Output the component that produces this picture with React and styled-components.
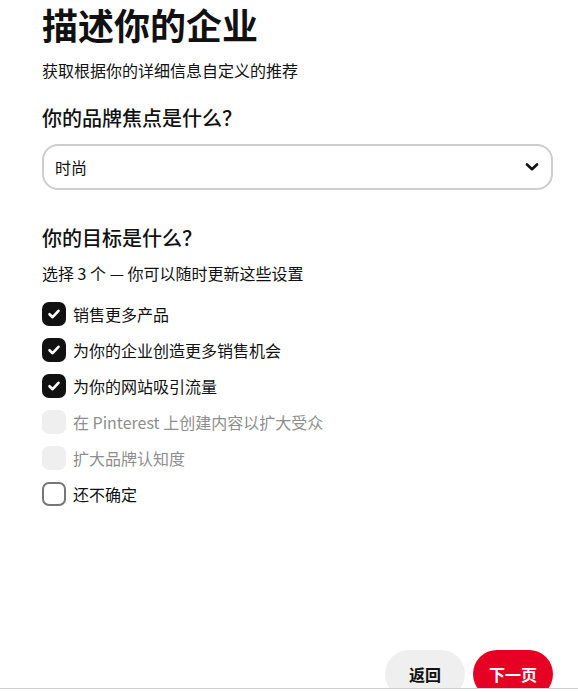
import React from "react";
import styled, { createGlobalStyle } from "styled-components";

const Global = createGlobalStyle`
  html, body { margin: 0; padding: 0; background: #fff; }
  body { font-family: "Noto Sans CJK SC", "Noto Sans", sans-serif; color: #111; }
  * { box-sizing: border-box; }
`;

const Frame = styled.div`
  height: 689px;
  border-bottom: 1px solid #cdcdcd;
  overflow: hidden;
  display: flex;
  flex-direction: column;
  padding: 2px 25px 0 42px;
`;

const Title = styled.h1`
  margin: 0;
  font-size: 36px;
  line-height: 44px;
  font-weight: 700;
  color: #111;
`;

const Subtitle = styled.p`
  margin: 12px 0 0;
  font-size: 16px;
  line-height: 24px;
  color: #111;
`;

const Question = styled.h2`
  margin: ${(p) => p.$mt}px 0 0;
  font-size: 20px;
  line-height: 28px;
  font-weight: 500;
  color: #111;
`;

const Select = styled.div`
  margin-top: 12px;
  height: 46px;
  border: 2px solid #cdcdcd;
  border-radius: 16px;
  display: flex;
  align-items: center;
  justify-content: space-between;
  padding: 0 12px 0 11px;
  font-size: 16px;
  color: #111;
`;

const Helper = styled.p`
  margin: 9px 0 0;
  font-size: 16px;
  line-height: 24px;
  color: #111;
`;

const List = styled.div`
  margin-top: 11px;
  display: flex;
  flex-direction: column;
`;

const Row = styled.label`
  height: 36px;
  display: flex;
  align-items: center;
  gap: 7px;
  font-size: 16px;
  color: ${(p) => (p.$disabled ? "#8e8e8e" : "#111")};
`;

const Box = styled.span`
  width: 24px;
  height: 24px;
  border-radius: 7px;
  flex-shrink: 0;
  display: flex;
  align-items: center;
  justify-content: center;
  background: ${(p) =>
    p.$state === "checked" ? "#111" : p.$state === "disabled" ? "#efefef" : "#fff"};
  border: ${(p) => (p.$state === "empty" ? "2px solid #767676" : "none")};
`;

const Spacer = styled.div`
  flex: 1;
`;

const Footer = styled.div`
  height: 38px;
  flex-shrink: 0;
  display: flex;
  justify-content: flex-end;
  align-items: flex-start;
  gap: 8px;
`;

const Button = styled.button`
  height: 48px;
  width: 80px;
  border: none;
  border-radius: 24px;
  font-family: inherit;
  font-size: 16px;
  font-weight: 700;
  background: ${(p) => (p.$primary ? "#e60023" : "#efefef")};
  color: ${(p) => (p.$primary ? "#fff" : "#111")};
  padding: 0;
`;

const Check = () => (
  <svg width="14" height="14" viewBox="0 0 14 14">
    <path d="M2.5 7.2 L5.6 10.2 L11.5 3.8" fill="none" stroke="#fff" strokeWidth="2.6" strokeLinecap="round" strokeLinejoin="round" />
  </svg>
);

const Chevron = () => (
  <svg width="14" height="10" viewBox="0 0 14 10">
    <path d="M2 2.5 L7 7.2 L12 2.5" fill="none" stroke="#111" strokeWidth="2.6" strokeLinecap="round" strokeLinejoin="round" />
  </svg>
);

const goals = [
  { label: "销售更多产品", state: "checked" },
  { label: "为你的企业创造更多销售机会", state: "checked" },
  { label: "为你的网站吸引流量", state: "checked" },
  { label: "在 Pinterest 上创建内容以扩大受众", state: "disabled" },
  { label: "扩大品牌认知度", state: "disabled" },
  { label: "还不确定", state: "empty" },
];

export default function App() {
  return (
    <>
      <Global />
      <Frame>
        <Title>描述你的企业</Title>
        <Subtitle>获取根据你的详细信息自定义的推荐</Subtitle>
        <Question $mt={22}>你的品牌焦点是什么？</Question>
        <Select>
          <span>时尚</span>
          <Chevron />
        </Select>
        <Question $mt={34}>你的目标是什么？</Question>
        <Helper>选择 3 个 — 你可以随时更新这些设置</Helper>
        <List>
          {goals.map((g) => (
            <Row key={g.label} $disabled={g.state === "disabled"}>
              <Box $state={g.state}>{g.state === "checked" && <Check />}</Box>
              {g.label}
            </Row>
          ))}
        </List>
        <Spacer />
        <Footer>
          <Button>返回</Button>
          <Button $primary>下一页</Button>
        </Footer>
      </Frame>
    </>
  );
}
